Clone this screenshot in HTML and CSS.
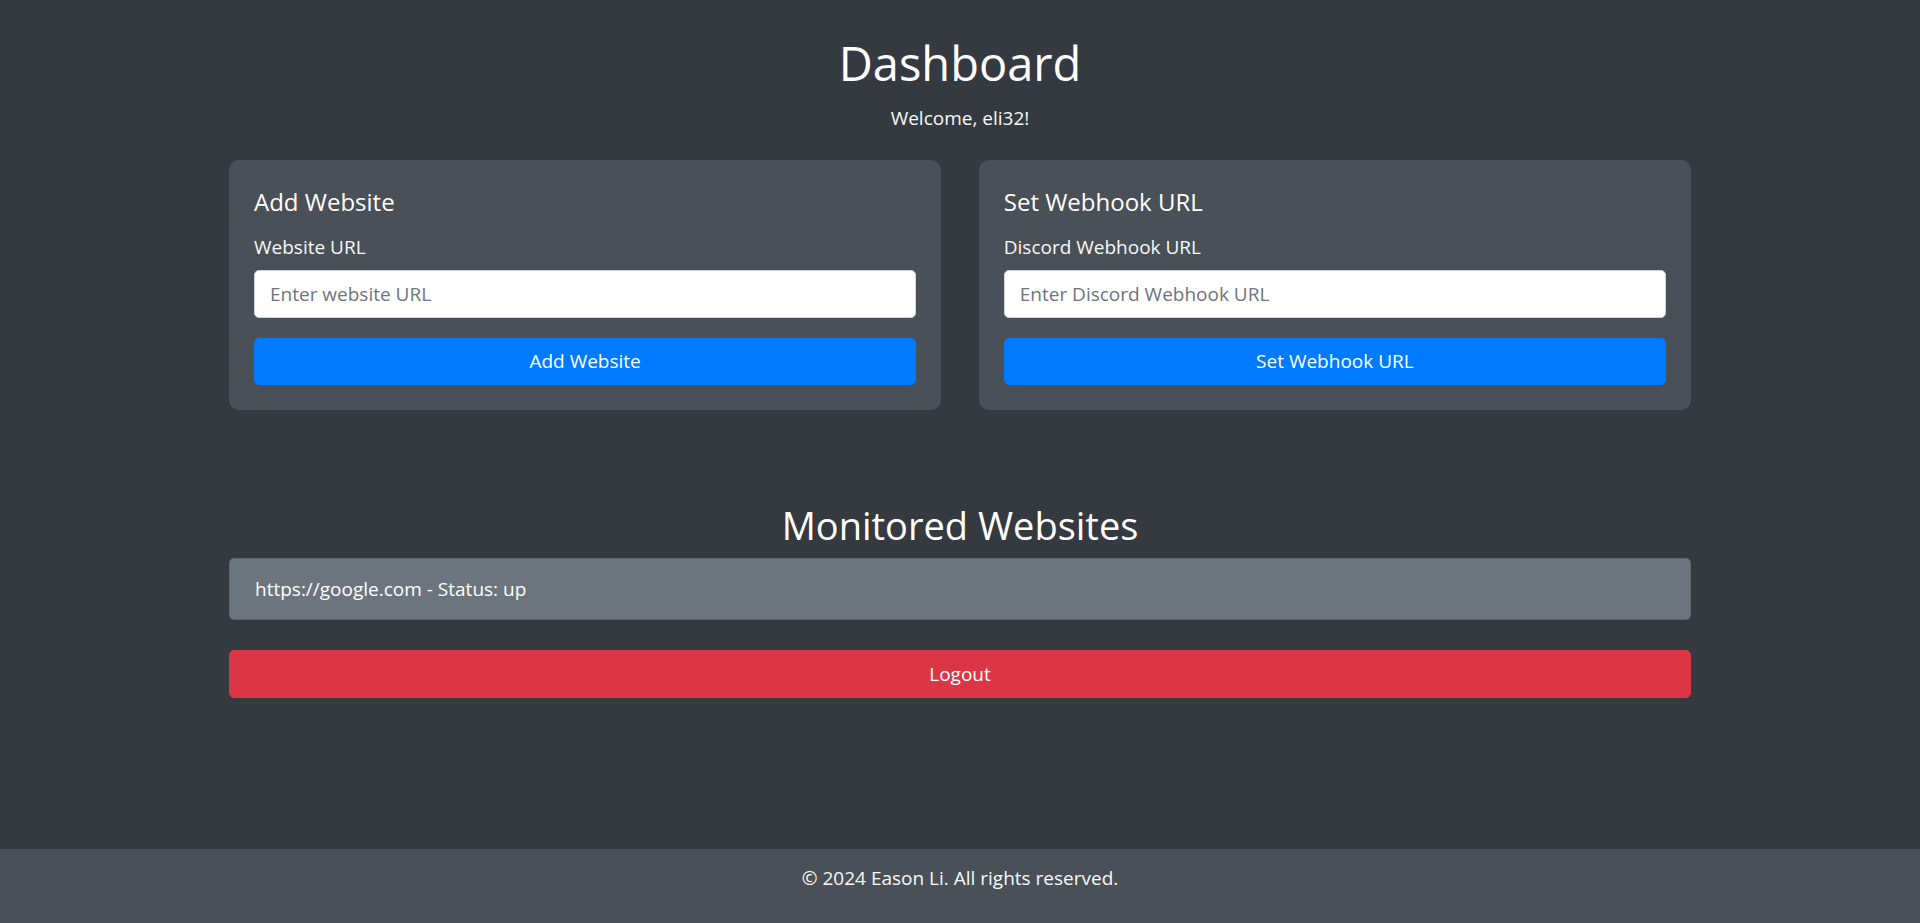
FILE: index.html
```html
<!DOCTYPE html>
<html lang="en">
<head>
<meta charset="utf-8">
<title>Dashboard</title>
<link rel="stylesheet" href="styles.css">
</head>
<body>
<main class="container">
  <header class="page-head">
    <h1 class="page-title">Dashboard</h1>
    <p class="welcome">Welcome, eli32!</p>
  </header>
  <div class="card-row">
    <section class="card">
      <h5 class="card-title">Add Website</h5>
      <div class="form-group">
        <label class="form-label" for="url">Website URL</label>
        <input class="form-control" id="url" type="text" placeholder="Enter website URL">
      </div>
      <button class="btn btn-primary" type="button">Add Website</button>
    </section>
    <section class="card">
      <h5 class="card-title">Set Webhook URL</h5>
      <div class="form-group">
        <label class="form-label" for="hook">Discord Webhook URL</label>
        <input class="form-control" id="hook" type="text" placeholder="Enter Discord Webhook URL">
      </div>
      <button class="btn btn-primary" type="button">Set Webhook URL</button>
    </section>
  </div>
  <h2 class="section-title">Monitored Websites</h2>
  <ul class="site-list">
    <li class="site-item">https://google.com - Status: up</li>
  </ul>
  <button class="btn btn-danger" type="button">Logout</button>
</main>
<footer class="footer">
  <p class="footer-text">© 2024 Eason Li. All rights reserved.</p>
</footer>
</body>
</html>
```

FILE: styles.css
```css
* { box-sizing: border-box; }

html, body {
  margin: 0;
  padding: 0;
}

body {
  min-height: 100vh;
  display: flex;
  flex-direction: column;
  background: #343a40;
  color: #f8f9fa;
  font-family: "Open Sans", "Noto Sans", sans-serif;
  font-size: 20px;
  line-height: 30px;
}

.container {
  width: 1462px;
  margin: 0 auto;
  padding-top: 33px;
  flex: 1 0 auto;
}

.page-head {
  text-align: center;
}

.page-title {
  margin: 0 0 10px;
  font-size: 47px;
  font-weight: 400;
  line-height: 60px;
  color: #ffffff;
}

.welcome {
  margin: 0;
  font-size: 19px;
}

.card-row {
  margin-top: 27px;
  display: grid;
  grid-template-columns: 1fr 1fr;
  column-gap: 37.5px;
}

.card {
  background: #495057;
  border-radius: 10px;
  padding: 27px 25px 25px;
}

.card-title {
  margin: 0 0 15px;
  font-size: 24px;
  font-weight: 400;
  line-height: 30px;
  color: #ffffff;
}

.form-group {
  margin-bottom: 20px;
}

.form-label {
  display: block;
  margin-bottom: 8px;
  font-size: 19px;
  line-height: 30px;
}

.form-control {
  display: block;
  width: 100%;
  height: 47.5px;
  padding: 7.5px 15px;
  font-family: inherit;
  font-size: 19px;
  line-height: 30px;
  color: #495057;
  background: #ffffff;
  border: 1px solid #ced4da;
  border-radius: 5px;
}

.form-control::placeholder {
  color: #6c757d;
}

.btn {
  display: block;
  width: 100%;
  height: 47.5px;
  padding: 7.5px 15px;
  font-family: inherit;
  font-size: 19px;
  line-height: 30px;
  color: #ffffff;
  border: 1px solid transparent;
  border-radius: 5px;
  text-align: center;
}

.btn-primary {
  background: #007bff;
  border-color: #007bff;
}

.btn-danger {
  background: #dc3545;
  border-color: #dc3545;
}

.section-title {
  margin: 91px 0 9px;
  text-align: center;
  font-size: 38px;
  font-weight: 400;
  line-height: 48px;
  color: #ffffff;
}

.site-list {
  list-style: none;
  margin: 0 0 30px;
  padding: 0;
}

.site-item {
  background: #6c757d;
  border: 1px solid rgba(0, 0, 0, 0.125);
  border-radius: 5px;
  padding: 15px 25px;
  font-size: 19px;
  line-height: 30px;
  color: #ffffff;
}

.footer {
  background: #495057;
  padding: 14px 0 10px;
  text-align: center;
}

.footer-text {
  margin: 0 0 20px;
  font-size: 19px;
}
```
